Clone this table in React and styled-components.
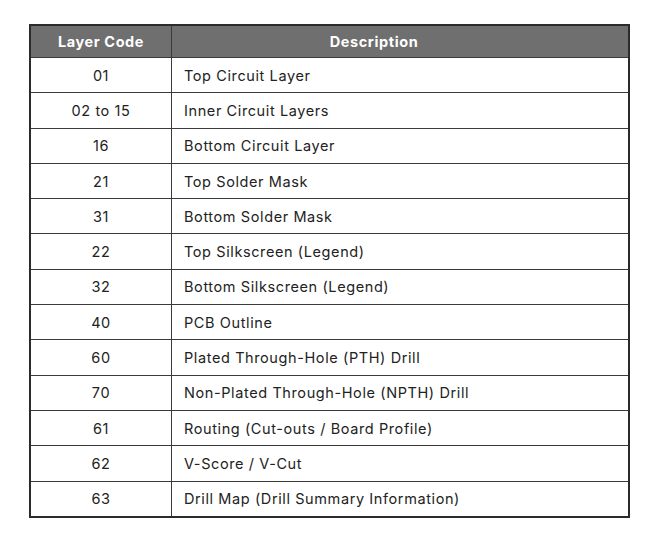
import React from "react";
import styled, { createGlobalStyle } from "styled-components";

const rows = [
  ["01", "Top Circuit Layer"],
  ["02 to 15", "Inner Circuit Layers"],
  ["16", "Bottom Circuit Layer"],
  ["21", "Top Solder Mask"],
  ["31", "Bottom Solder Mask"],
  ["22", "Top Silkscreen (Legend)"],
  ["32", "Bottom Silkscreen (Legend)"],
  ["40", "PCB Outline"],
  ["60", "Plated Through-Hole (PTH) Drill"],
  ["70", "Non-Plated Through-Hole (NPTH) Drill"],
  ["61", "Routing (Cut-outs / Board Profile)"],
  ["62", "V-Score / V-Cut"],
  ["63", "Drill Map (Drill Summary Information)"],
];

const GlobalStyle = createGlobalStyle`
  html, body {
    margin: 0;
    background: #ffffff;
  }
  body {
    font-family: Inter, "Noto Sans", sans-serif;
    color: #222222;
  }
`;

const Page = styled.div`
  padding: 24px 0 0 29px;
`;

const Table = styled.table`
  width: 601px;
  border-collapse: collapse;
  border: 2px solid #2b2b2b;
  font-size: 14.5px;
  letter-spacing: 0.6px;
`;

const HeadCell = styled.th`
  height: 31px;
  padding: ${(p) => (p.$narrow ? "0" : "0 52px 0 0")};
  background: #6f6f6f;
  color: #ffffff;
  font-weight: 700;
  text-align: center;
  border: 1px solid #3a3a3a;
  width: ${(p) => (p.$narrow ? "140px" : "auto")};
`;

const Cell = styled.td`
  height: 34.3px;
  padding: ${(p) => (p.$center ? "0" : "0 0 0 12px")};
  text-align: ${(p) => (p.$center ? "center" : "left")};
  border: 1px solid #3a3a3a;
  color: #222222;
  font-weight: 400;
`;

export default function App() {
  return (
    <Page>
      <GlobalStyle />
      <Table>
        <thead>
          <tr>
            <HeadCell $narrow>Layer Code</HeadCell>
            <HeadCell>Description</HeadCell>
          </tr>
        </thead>
        <tbody>
          {rows.map(([code, desc]) => (
            <tr key={code}>
              <Cell $center>{code}</Cell>
              <Cell>{desc}</Cell>
            </tr>
          ))}
        </tbody>
      </Table>
    </Page>
  );
}
